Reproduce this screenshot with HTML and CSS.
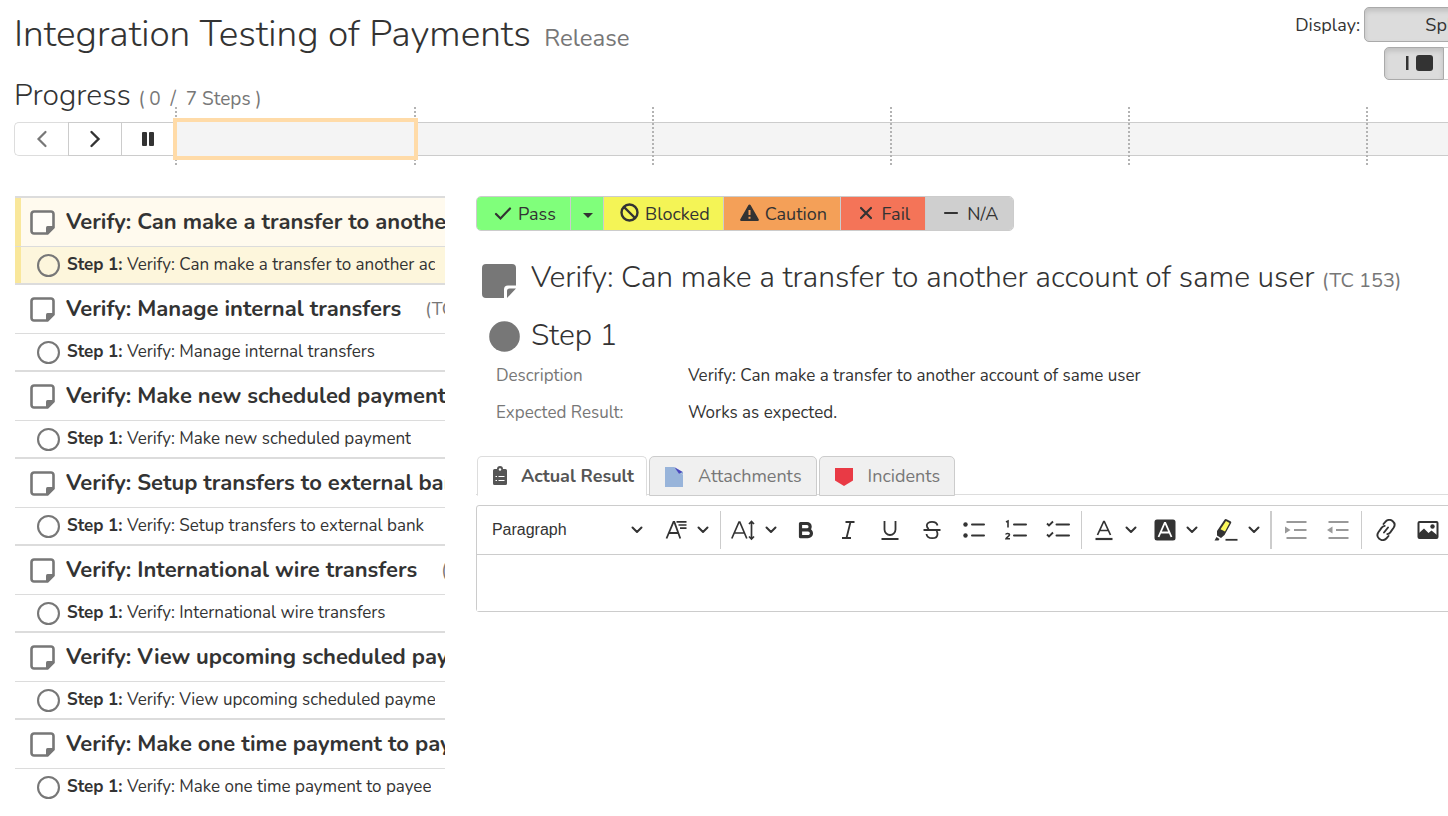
FILE: index.html
```html
<!DOCTYPE html>
<html lang="en">
<head>
<meta charset="utf-8">
<meta name="viewport" content="width=device-width, initial-scale=1">
<title>Integration Testing of Payments</title>
<link rel="stylesheet" href="styles.css">
</head>
<body>
<svg class="sprite" aria-hidden="true">
  <symbol id="note" viewBox="0 0 25 25"><path d="M4 1.500h17a2.500 2.500 0 0 1 2.500 2.500v13.500l-6 6H4A2.500 2.500 0 0 1 1.500 21V4A2.500 2.500 0 0 1 4 1.500z" fill="#fff" fill-opacity=".6" stroke="#777" stroke-width="2.600"/><path d="M16 24v-6.500a1.500 1.500 0 0 1 1.500-1.500H24v2l-6 6z" fill="#777"/></symbol>
  <symbol id="ring" viewBox="0 0 22 22"><circle cx="11" cy="11" r="10" fill="none" stroke="#777" stroke-width="2"/></symbol>
  <symbol id="chev" viewBox="0 0 12 12"><path d="M1.500 3.500 6 8l4.500-4.500" fill="none" stroke="#333" stroke-width="2" stroke-linecap="round" stroke-linejoin="round"/></symbol>
</svg>
<div class="page">
  <header class="top">
    <h1>Integration Testing of Payments <small>Release</small></h1>
    <div class="display">
      <div class="display-row"><span>Display:</span><button class="toggle toggle-wide on">Split</button></div>
      <div class="display-row pair">
        <button class="toggle on" aria-label="Split view"><svg width="28" height="18" viewBox="0 0 28 18"><path d="M1 2h2.500v14H1z" fill="#333"/><rect x="11" y="1" width="17" height="16" rx="3" fill="#333"/></svg></button><button class="toggle" aria-label="Full view"></button>
      </div>
    </div>
  </header>

  <section class="progress">
    <h2>Progress <small>( 0 &nbsp;/ &nbsp;7 Steps )</small></h2>
    <div class="track">
      <button class="nav first" aria-label="Previous" disabled><svg width="12" height="18" viewBox="0 0 12 18"><path d="M9.500 2 2.500 9l7 7" fill="none" stroke="#777" stroke-width="2.200" stroke-linecap="round"/></svg></button>
      <button class="nav" aria-label="Next"><svg width="12" height="18" viewBox="0 0 12 18"><path d="M2.500 2l7 7-7 7" fill="none" stroke="#333" stroke-width="2.400" stroke-linecap="round"/></svg></button>
      <button class="nav" aria-label="Pause"><svg width="12" height="16" viewBox="0 0 12 16"><rect y="1" width="5" height="14" rx="1" fill="#333"/><rect x="7" y="1" width="5" height="14" rx="1" fill="#333"/></svg></button>
      <div class="steps"><i class="current"></i><i></i><i></i><i></i><i></i><i></i><i></i></div>
    </div>
  </section>

  <main class="columns">
    <ul class="cases">
      <li class="active"><h3><svg class="note"><use href="#note"/></svg>Verify: Can make a transfer to another account of same user</h3><p><svg class="ring"><use href="#ring"/></svg><span><b>Step 1:</b> Verify: Can make a transfer to another account of same user</span></p></li>
      <li><h3><svg class="note"><use href="#note"/></svg>Verify: Manage internal transfers <small>(TC 154)</small></h3><p><svg class="ring"><use href="#ring"/></svg><span><b>Step 1:</b> Verify: Manage internal transfers</span></p></li>
      <li><h3><svg class="note"><use href="#note"/></svg>Verify: Make new scheduled payment</h3><p><svg class="ring"><use href="#ring"/></svg><span><b>Step 1:</b> Verify: Make new scheduled payment</span></p></li>
      <li><h3><svg class="note"><use href="#note"/></svg>Verify: Setup transfers to external bank</h3><p><svg class="ring"><use href="#ring"/></svg><span><b>Step 1:</b> Verify: Setup transfers to external bank</span></p></li>
      <li><h3><svg class="note"><use href="#note"/></svg>Verify: International wire transfers <small>(TC 157)</small></h3><p><svg class="ring"><use href="#ring"/></svg><span><b>Step 1:</b> Verify: International wire transfers</span></p></li>
      <li><h3><svg class="note"><use href="#note"/></svg>Verify: View upcoming scheduled payments</h3><p><svg class="ring"><use href="#ring"/></svg><span><b>Step 1:</b> Verify: View upcoming scheduled payments</span></p></li>
      <li><h3><svg class="note"><use href="#note"/></svg>Verify: Make one time payment to payee</h3><p><svg class="ring"><use href="#ring"/></svg><span><b>Step 1:</b> Verify: Make one time payment to payee</span></p></li>
    </ul>

    <article class="detail">
      <div class="verdicts">
        <button class="pass"><svg width="18" height="14" viewBox="0 0 18 14"><path d="M2 7 6.500 11.500 16 1.500" fill="none" stroke="#333" stroke-width="2.200" stroke-linecap="round"/></svg>Pass</button>
        <button class="more" aria-label="More pass options"><svg width="10" height="8" viewBox="0 0 10 8"><path d="M0 3h10L5 8z" fill="#333"/></svg></button>
        <button class="blocked"><svg width="19" height="21" viewBox="0 0 19 21"><g fill="none" stroke="#333" stroke-width="2.400"><circle cx="9.500" cy="9.500" r="8"/><path d="M4 4l11 11"/></g></svg>Blocked</button>
        <button class="caution"><svg width="19" height="19" viewBox="0 0 19 19"><path d="M8.300 1.200a1.400 1.400 0 0 1 2.400 0l8 14A1.300 1.300 0 0 1 17.500 17h-16A1.300 1.300 0 0 1 .3 15.200z" fill="#333"/><path d="M9.500 6v5M9.500 12.800v2" stroke="#f4a058" stroke-width="2"/></svg>Caution</button>
        <button class="fail"><svg width="14" height="16" viewBox="0 0 14 16"><path d="M2 2l10 10M12 2 2 12" stroke="#333" stroke-width="2.200" stroke-linecap="round"/></svg>Fail</button>
        <button class="na"><svg width="16" height="14" viewBox="0 0 16 14"><path d="M2 6h12" stroke="#333" stroke-width="2.200" stroke-linecap="round"/></svg>N/A</button>
      </div>

      <h2 class="case-title"><svg width="34" height="34" viewBox="0 0 34 34"><path d="M4 0h26a4 4 0 0 1 4 4v17.500H26a4 4 0 0 0-4 4V34H4a4 4 0 0 1-4-4V4a4 4 0 0 1 4-4zM34 24.500 25 34v-7a2.500 2.500 0 0 1 2.500-2.500z" fill="#777"/></svg><span>Verify: Can make a transfer to another account of same user <small>(TC 153)</small></span></h2>
      <h2 class="step-title"><svg width="31" height="31" viewBox="0 0 31 31"><circle cx="15.500" cy="15.500" r="15.300" fill="#777"/></svg>Step 1</h2>
      <dl>
        <dt>Description</dt><dd>Verify: Can make a transfer to another account of same user</dd>
        <dt>Expected Result:</dt><dd>Works as expected.</dd>
      </dl>

      <div class="tabs" role="tablist">
        <button class="tab selected" role="tab" aria-selected="true"><svg width="18" height="20" viewBox="0 0 18 20"><path d="M3.500 3H6a3 3 0 0 1 6 0h2.500A1.500 1.500 0 0 1 16 4.500v13a1.500 1.500 0 0 1-1.500 1.500h-11A1.500 1.500 0 0 1 2 17.500v-13A1.500 1.500 0 0 1 3.500 3z" fill="#555"/><circle cx="9" cy="3.500" r="1.200" fill="#fff"/><path d="M4.500 10.500h1.500M7.500 10.500h6M4.500 14.500h1.500M7.500 14.500h6" stroke="#fff"/></svg>Actual Result</button>
        <button class="tab" role="tab"><svg width="18" height="22" viewBox="0 0 18 22"><path d="M0 2h9l9 8v12H0z" fill="#98b4da"/><path d="M9 2l9 5v3z" fill="#98b4da"/><path d="M9.500 2.300 17.500 7l-3.500 1.800z" fill="#4a47bd"/></svg>Attachments</button>
        <button class="tab" role="tab"><svg width="18" height="20" viewBox="0 0 18 20"><path d="M0 2h18v12.500L9 20l-9-5.500z" fill="#e93a45"/></svg>Incidents</button>
      </div>

      <div class="editor">
        <div class="toolbar">
          <label class="style"><select aria-label="Paragraph style"><option>Paragraph</option></select><svg class="chev"><use href="#chev"/></svg></label>
          <button class="tool drop" aria-label="Font family"><svg width="22" height="22" viewBox="0 0 22 22"><path d="M1.500 19.500 8.500 3h.800l6 16.500M4 14h9.500" fill="none" stroke="#333" stroke-width="1.800"/><path d="M11.500 2.800h10M13.500 6h8M15 9.200h6.500" stroke="#333" stroke-width="1.700"/></svg><svg class="chev"><use href="#chev"/></svg></button>
          <i class="sep"></i>
          <button class="tool drop" aria-label="Font size"><svg width="24" height="22" viewBox="0 0 24 22"><path d="M.800 19.500 8 3h.800l7 16.500M3.500 14h10M20.500 3v17M18 5l2.500-2.500L23 5M18 17.500l2.500 2.500 2.500-2.500" fill="none" stroke="#333" stroke-width="1.700"/></svg><svg class="chev"><use href="#chev"/></svg></button>
          <button class="tool" aria-label="Bold"><svg width="22" height="22" viewBox="0 0 22 22"><path d="M5.500 4.500h6.500a3 3 0 0 1 0 6.300H5.500zM5.500 10.800h7.500a3.300 3.300 0 0 1 0 6.900H5.500z" fill="none" stroke="#333" stroke-width="3.200" stroke-linejoin="round"/></svg></button>
          <button class="tool" aria-label="Italic"><svg width="22" height="22" viewBox="0 0 22 22"><path d="M8.500 3h9M5 19h9M13.500 3l-4 16" fill="none" stroke="#333" stroke-width="1.800"/></svg></button>
          <button class="tool" aria-label="Underline"><svg width="22" height="22" viewBox="0 0 22 22"><path d="M5.500 2v8.500a5.500 5.500 0 0 0 11 0V2M2.500 20h17" fill="none" stroke="#333" stroke-width="1.800"/></svg></button>
          <button class="tool" aria-label="Strikethrough"><svg width="22" height="22" viewBox="0 0 22 22"><path d="M16.500 6.500C16 4 14 2.800 11 2.800c-3.200 0-5.200 1.600-5.200 3.800 0 1.500.7 2.600 2 3.400M15.500 12c.6.700 1 1.700 1 2.900 0 2.700-2.200 4.300-5.200 4.300-3.300 0-5.500-1.600-5.800-4.200" fill="none" stroke="#333" stroke-width="1.800"/><path d="M2.500 11h17" stroke="#333" stroke-width="2"/></svg></button>
          <button class="tool" aria-label="Bulleted list"><svg width="22" height="22" viewBox="0 0 22 22"><circle cx="2.500" cy="5.500" r="2.200" fill="#333"/><circle cx="2.500" cy="16.500" r="2.200" fill="#333"/><path d="M9 5.500h12M9 16.500h12" stroke="#333" stroke-width="2" stroke-linecap="round"/></svg></button>
          <button class="tool" aria-label="Numbered list"><svg width="22" height="22" viewBox="0 0 22 22"><path d="M1 3l2-1v6.500M.800 15.500c.2-1.300 3.700-1.300 3.700.3 0 1.500-3 2.500-3.500 4h4" fill="none" stroke="#333" stroke-width="1.600"/><path d="M9 5.500h12M9 16.500h12" stroke="#333" stroke-width="2" stroke-linecap="round"/></svg></button>
          <button class="tool" aria-label="To-do list"><svg width="24" height="22" viewBox="0 0 24 22"><path d="M1 4.500 3 6.500l4-4M1 15.500l2 2 4-4" fill="none" stroke="#333" stroke-width="1.800"/><path d="M10.500 5.500H23M10.500 16.500H23" stroke="#333" stroke-width="2" stroke-linecap="round"/></svg></button>
          <i class="sep"></i>
          <button class="tool drop" aria-label="Font colour"><svg width="22" height="22" viewBox="0 0 22 22"><path d="M4.500 16 10.700 2.500h.6L17.500 16M6.500 11.500h9" fill="none" stroke="#333" stroke-width="1.700"/><path d="M2.500 20h17" stroke="#333" stroke-width="2.200"/></svg><svg class="chev"><use href="#chev"/></svg></button>
          <button class="tool drop" aria-label="Background colour"><svg width="22" height="22" viewBox="0 0 22 22"><rect x=".5" y=".5" width="21" height="21" rx="2.500" fill="#333"/><path d="M4.500 18 10.700 4h.6l6.200 14M6.500 13.500h9" fill="none" stroke="#fff" stroke-width="1.800"/></svg><svg class="chev"><use href="#chev"/></svg></button>
          <button class="tool drop" aria-label="Highlight"><svg width="24" height="22" viewBox="0 0 24 22"><path d="M3 12 10.500.800a1.500 1.500 0 0 1 2-.5l4 2a1.500 1.500 0 0 1 .5 2L10.500 16l-3.500 3-4-2.500z" fill="#333"/><path d="M12 2l3.500 2-4.500 8.500-4.500-2.300z" fill="#fdfa5c"/><path d="M.5 21.500 2.500 18l3 2-1 1.500z" fill="#333"/><path d="M11.500 20.800h12" stroke="#333" stroke-width="1.800"/></svg><svg class="chev"><use href="#chev"/></svg></button>
          <i class="sep thick"></i>
          <button class="tool" aria-label="Increase indent" disabled><svg width="22" height="22" viewBox="0 0 22 22"><path d="M0 7.500 5.500 11 0 14.500z" fill="#999"/><path d="M1.500 3h20M9 11h12.500M1.500 19h20" stroke="#999" stroke-width="2"/></svg></button>
          <button class="tool" aria-label="Decrease indent" disabled><svg width="22" height="22" viewBox="0 0 22 22"><path d="M5.500 7.500 0 11l5.500 3.500z" fill="#999"/><path d="M1.500 3h20M9 11h12.500M1.500 19h20" stroke="#999" stroke-width="2"/></svg></button>
          <i class="sep"></i>
          <button class="tool" aria-label="Link"><svg width="22" height="22" viewBox="0 0 22 22"><g fill="none" stroke="#333" stroke-width="1.900" stroke-linecap="round"><path d="M8.500 5 10.300 2.800a5 5 0 0 1 7.500-.5 5 5 0 0 1 .800 6.500l-3.300 4.500a5 5 0 0 1-3 1.800"/><path d="M13.500 17l-1.800 2.200a5 5 0 0 1-7.500.5 5 5 0 0 1-.800-6.500l3.300-4.500a5 5 0 0 1 3-1.800M9 13.500l4-5"/></g></svg></button>
          <button class="tool" aria-label="Image"><svg width="22" height="22" viewBox="0 0 22 22"><rect x="1.500" y="3" width="19" height="16" rx="1" fill="none" stroke="#333" stroke-width="2"/><path d="M2 18v-4l5-4.500 4.500 4.500 3-2.500L20 16v2z" fill="#333"/><circle cx="15.500" cy="7.500" r="2.200" fill="#333"/></svg></button>
        </div>
        <textarea aria-label="Actual result"></textarea>
      </div>
    </article>
  </main>
</div>
</body>
</html>
```
FILE: styles.css
```css
*, *::after { box-sizing: border-box; }
body {
  margin: 0;
  color: #333;
  background: #fff;
  font: 18px/26px Nunito, Lato, sans-serif;
}
h1, h2, h3, p, ul, dl, dd { margin: 0; padding: 0; }
h1, h2 { font-weight: 300; }
small { color: #777; font-weight: 400; }
button, select, textarea { font: inherit; color: inherit; margin: 0; padding: 0; }
svg { flex: none; }
.sprite { display: none; }
.page { padding-left: 14px; overflow: hidden; min-height: 100vh; }

.top { display: flex; justify-content: space-between; height: 74px; white-space: nowrap; }
h1 { font-size: 37px; line-height: 68px; }
h1 small { margin-left: 4px; font-size: 24px; }
.display { padding-top: 7px; margin-right: -64px; }
.display-row { display: flex; align-items: center; justify-content: flex-end; gap: 4px; }
.pair { gap: 0; margin-top: 5px; }
.toggle { display: flex; align-items: center; justify-content: center; width: 68px; height: 33px; border: 1px solid #ccc; border-left: 0; background: #fff; }
.toggle.on { width: 60px; border: 1px solid #aaa; border-radius: 5px 0 0 5px; background: #dcdcdc; box-shadow: inset 0 3px 5px rgba(0, 0, 0, .13); padding: 0 0 2px 10px; }
.toggle-wide.on { width: 148px; height: 35px; padding: 0 0 0 12px; }

.progress h2 { font-size: 30px; line-height: 44px; white-space: nowrap; }
.progress small { font-size: 19px; }
.track { display: flex; margin-top: 1px; }
.nav { display: flex; align-items: center; justify-content: center; width: 53px; height: 34px; background: #fff; border: 1px solid #ccc; border-right: 0; }
.nav.first { width: 54px; border-color: #ddd; border-radius: 5px 0 0 5px; }
.steps { display: flex; flex: 1; min-width: 0; height: 34px; padding-left: 1px; background: #f4f4f4; border: solid #ccc; border-width: 1px 0; }
.steps i { flex: 0 0 238px; height: 58px; margin-top: -16px; border-left: 2px dotted #b3b3b3; }
.steps .current { flex-basis: 239px; position: relative; }
.steps .current::after { content: ""; position: absolute; left: -4px; right: -4px; top: 11px; height: 42px; border: 4px solid #ffdba8; background: #f4f4f4; }

.columns { display: flex; gap: 31px; margin-top: 40px; padding-left: 1px; }
.cases { flex: 0 0 30%; min-width: 0; list-style: none; }
.cases li { border-top: 2px solid #dcdcdc; }
.cases h3 { display: flex; align-items: center; height: 49px; padding-left: 15px; border-bottom: 1px solid #dcdcdc; overflow: hidden; white-space: nowrap; font-size: 22px; }
.cases h3 small { margin-left: 24px; font-size: 18px; }
.cases p { display: flex; align-items: center; height: 36px; padding: 0 10px 0 22px; white-space: nowrap; font-size: 17px; }
.cases p span { overflow: hidden; }
.note { width: 25px; height: 25px; margin-right: 11px; }
.ring { width: 23px; height: 23px; margin-right: 7px; }
.active h3, .active p { box-shadow: inset 6px 0 #f9e79b; }
.active h3 { background: #fffaee; }
.active p { background: #fdf6dc; }

.detail { flex: 1; min-width: 0; }
.verdicts { display: flex; width: max-content; border: 1px solid #ccc; border-radius: 5px; overflow: hidden; }
.verdicts button { display: flex; align-items: center; justify-content: center; gap: 6px; height: 33px; padding-left: 3px; border: 0; border-right: 1px solid #ccc; }
.verdicts .pass { width: 94px; background: #80ff7b; }
.verdicts .more { width: 33px; background: #80ff7b; }
.verdicts .blocked { width: 120px; background: #f4f456; }
.verdicts .caution { width: 117px; background: #f4a058; }
.verdicts .fail { width: 85px; gap: 9px; background: #f47458; }
.verdicts .na { width: 87px; gap: 8px; background: #cfcfcf; border: 0; }

.case-title, .step-title { display: flex; align-items: center; font-size: 30px; white-space: nowrap; }
.case-title { gap: 15px; margin-top: 24px; padding-left: 6px; line-height: 46px; }
.case-title span { padding-bottom: 2px; }
.case-title small { font-size: 20px; }
.step-title { gap: 11px; padding-left: 13px; margin-top: 8px; line-height: 44px; }
dl { display: grid; grid-template-columns: 192px 1fr; row-gap: 11px; padding-left: 20px; margin-top: 5px; font-size: 17px; }
dt { color: #777; }

.tabs { display: flex; gap: 2px; margin-top: 30px; border-bottom: 1px solid #ddd; padding-left: 1px; }
.tab { display: flex; align-items: center; height: 40px; margin-bottom: -2px; padding: 0 14px 0 15px; gap: 15px; border: 1px solid #ccc; border-radius: 5px 5px 0 0; background: #f0f0f0; color: #777; }
.tab.selected { padding: 0 12px 0 13px; gap: 12px; border-color: #ddd; border-bottom-color: #fff; background: #fff; color: #555; font-weight: 700; }

.editor { margin: 10px -1px 0 0; border: 1px solid #ccc; border-radius: 3px 0 0 3px; }
.toolbar { display: flex; height: 49px; align-items: center; border-bottom: 1px solid #ccc; }
.style { display: flex; align-items: center; width: 180px; padding-left: 15px; flex: none; }
.style select { flex: 1; border: 0; background: none; appearance: none; font: 16px/24px "Liberation Sans", sans-serif; }
.style .chev { margin-right: 14px; }
.chev { width: 12px; height: 12px; }
.tool { display: flex; flex: none; align-items: center; justify-content: center; width: 42px; height: 40px; border: 0; background: none; }
.drop { width: 61px; gap: 10px; }
.sep { flex: none; width: 1px; height: 38px; margin: 0 3px 0 2px; background: #ccc; }
.thick { width: 2px; }
textarea { display: block; width: 100%; height: 56px; padding: 10px 15px; border: 0; resize: none; }
```
